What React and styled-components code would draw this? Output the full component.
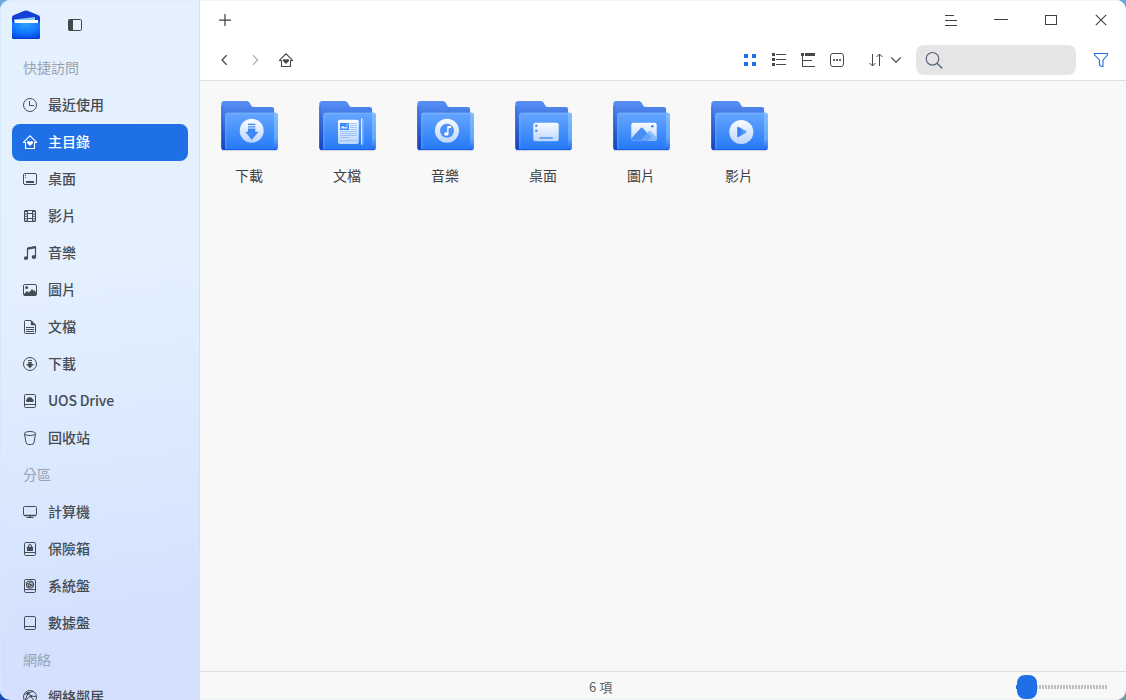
import React from "react";
import styled, { createGlobalStyle } from "styled-components";

const GlobalStyle = createGlobalStyle`
  * { box-sizing: border-box; }
  html, body { margin: 0; height: 100%; overflow: hidden; }
  #root { height: 100vh; }
  body {
    font-family: "Noto Sans CJK TC", "Noto Sans CJK SC", sans-serif;
    background:
      linear-gradient(90deg, #6fa9e4, #6aa5e6) top / 100% 50% no-repeat,
      linear-gradient(90deg, #1a48b8 0%, #7398ae 100%) bottom / 100% 50% no-repeat;
  }
  svg { display: block; flex: none; }
`;

const Window = styled.div`
  display: flex;
  width: 100vw;
  height: 100vh;
  border-radius: 10px;
  overflow: hidden;
`;

const Sidebar = styled.aside`
  flex: none;
  width: 200px;
  height: 100%;
  overflow: hidden;
  background: linear-gradient(172deg, #e5f1fe 0%, #e4f0fe 38%, #dceafe 62%, #d5e2fe 84%, #d3dffd 100%);
  border-right: 1px solid #d6e1f0;
  box-shadow: inset 1px 0 #d5e7fb, inset 0 1px #deecfb;
`;

const SidebarHeader = styled.div`
  display: flex;
  align-items: flex-start;
  height: 50px;
  padding: 9px 0 0 11px;
  gap: 26px;
`;

const ToggleSlot = styled.div`
  padding-top: 8px;
  color: #43484d;
`;

const GroupTitle = styled.div`
  height: 37px;
  padding-left: 23px;
  font-size: 14px;
  line-height: 34px;
  color: #98a3af;
`;

const Row = styled.div`
  display: flex;
  align-items: flex-start;
  gap: 10px;
  height: 37px;
  margin: 0 11px 0 12px;
  padding: 10px 0 0 10px;
  border-radius: 8px;
  background: ${(p) => (p.$active ? "#1f6fe7" : "transparent")};
  color: ${(p) => (p.$active ? "#fff" : "#454c53")};
`;

const RowLabel = styled.span`
  font-size: 14px;
  font-weight: 500;
  line-height: 14px;
  letter-spacing: ${(p) => (p.$latin ? "-0.18px" : "normal")};
  white-space: nowrap;
`;

const Main = styled.main`
  flex: 1;
  min-width: 0;
  display: flex;
  flex-direction: column;
  background: #f8f8f8;
`;

const TitleBar = styled.div`
  display: flex;
  align-items: center;
  justify-content: space-between;
  height: 40px;
  background: #fff;
  box-shadow: inset 0 1px #edf5fd;
  color: #414141;
`;

const WindowButtons = styled.div`
  display: flex;
`;

const TitleButton = styled.div`
  display: flex;
  align-items: center;
  justify-content: center;
  width: 50px;
  height: 40px;
  color: #414141;
`;

const Toolbar = styled.div`
  display: flex;
  align-items: center;
  height: 41px;
  padding: 0 17px 1px 16px;
  background: #fff;
  border-bottom: 1px solid #e0e0e0;
  color: #484848;
`;

const NavGroup = styled.div`
  display: flex;
  flex: 1;
  gap: 15px;
`;

const ViewGroup = styled.div`
  display: flex;
  gap: 13px;
  margin-right: 23px;
`;

const SortGroup = styled.div`
  display: flex;
  gap: 4px;
  margin-right: 12px;
`;

const ToolIcon = styled.span`
  color: ${(p) => p.$tone || "inherit"};
`;

const SearchBox = styled.div`
  display: flex;
  align-items: center;
  width: 160px;
  height: 30px;
  padding-left: 8px;
  margin-right: 17px;
  border-radius: 8px;
  background: #e5e5e5;
  color: #56627a;
`;

const Files = styled.div`
  flex: 1;
  display: flex;
  align-items: flex-start;
  padding-top: 13px;
`;

const FileItem = styled.div`
  display: flex;
  flex-direction: column;
  align-items: center;
  gap: 7px;
  width: 98px;
`;

const FileLabel = styled.span`
  font-size: 14px;
  line-height: 20px;
  color: #414141;
`;

const StatusBar = styled.footer`
  display: grid;
  grid-template-columns: 1fr auto 1fr;
  align-items: center;
  height: 29px;
  border-top: 1px solid #dedede;
  box-shadow: inset 0 -1px #edf0f5;
`;

const Count = styled.span`
  grid-column: 1 / 3;
  padding-left: 389px;
  margin-top: 2px;
  font-size: 13px;
  line-height: 20px;
  color: #5f5f5f;
`;

const Slider = styled.div`
  grid-column: 3;
  justify-self: end;
  display: flex;
  align-items: center;
  height: 28px;
  margin-right: 18px;
  padding-top: 1px;
`;

const SliderStart = styled.i`
  width: 1px;
  height: 4px;
  background: #1f6fe7;
`;

const Knob = styled.i`
  width: 20px;
  height: 24px;
  border-radius: 8px;
  background: #1f6fe7;
`;

const Ticks = styled.i`
  width: 71px;
  height: 4px;
  background: repeating-linear-gradient(90deg, transparent 0 1px, #c0c0c0 1px 3px);
  background-position: 1px 0;
`;

const Icon = ({ w = 16, h = 16, children }) => (
  <svg width={w} height={h} viewBox={`0 0 ${w} ${h}`} fill="none" stroke="currentColor" strokeWidth="1">
    {children}
  </svg>
);
const Solid = (props) => <g fill="currentColor" stroke="none" {...props} />;

const Disk = () => (
  <>
    <rect x="2.5" y="1.5" width="11" height="13" rx="1.3" />
    <path d="M2.5 11.5h11" />
  </>
);

const icons = {
  clock: (
    <>
      <circle cx="8" cy="8" r="6.5" />
      <path d="M7.5 4v4.5H12" />
    </>
  ),
  home: (
    <>
      <path d="M3.5 8v6.5h9V8" strokeWidth="1.1" />
      <path d="M1 8.5h2M13 8.5h2M1.6 8.2 8 1.8l6.4 6.4" strokeWidth="1.1" />
      <Solid>
        <path d="M8 12 5.2 9.3C4.5 8.2 5.2 7 6.4 7c.7 0 1.2.3 1.6.9.4-.6.9-.9 1.6-.9 1.2 0 1.9 1.2 1.2 2.3z" />
      </Solid>
    </>
  ),
  desktop: (
    <>
      <rect x="1.5" y="2.5" width="13" height="11" rx="1.5" />
      <Solid>
        <path d="M3 4h1v1H3zM3 6h1v1H3zM4 10h8v2H4z" />
      </Solid>
    </>
  ),
  film: (
    <>
      <rect x="2.5" y="2.5" width="11" height="11" rx=".5" />
      <path d="M5.5 2.5v11M10.5 2.5v11M5.5 5.5h5M5.5 10.5h5" />
      <path d="M4 3v10M12 3v10" strokeWidth="2" strokeDasharray="1 1.4" />
    </>
  ),
  music: (
    <>
      <path d="M5.500 13V3.400l8-1.600V12" strokeWidth="1.200" />
      <path d="M5.500 3.600l8-1.500" strokeWidth="2.200" />
      <Solid>
        <ellipse cx="4" cy="13.100" rx="2.200" ry="1.900" />
        <ellipse cx="11.900" cy="12" rx="2.200" ry="1.900" />
      </Solid>
    </>
  ),
  picture: (
    <>
      <rect x="1.500" y="2.500" width="13" height="11" rx="1.300" />
      <Solid>
        <circle cx="4.600" cy="5.600" r="1.500" />
        <path d="M2 13.500V12l3-2.900 2 1.400 3-3.400 1.400 1.600 1-.6L14.300 11v2.500z" />
      </Solid>
    </>
  ),
  document: (
    <>
      <path d="M2.500 2.500q0-1 1-1H9l4.500 4.500v7.500q0 1-1 1h-9q-1 0-1-1zM4 8.500h8M4 10.500h8M4 12.500h8" />
      <Solid>
        <path d="M8.800 1.200 13.800 6.200H9.600q-.8 0-.8-.8z" />
      </Solid>
    </>
  ),
  download: (
    <>
      <circle cx="8" cy="8" r="6.500" />
      <Solid>
        <path d="M6 4h4v1H6zM6 6h4v1H6zM6.500 7h3v1H12l-4 4.300L4 8h2.500z" />
      </Solid>
    </>
  ),
  drive: (
    <>
      <Disk />
      <Solid>
        <path d="M5 9a1.400 1.400 0 0 1-.2-2.600C5 4.600 6.600 3.800 8 4.400c1-.2 2.200.4 2.500 1.600C12 6.200 12.300 8.500 11 9z" />
      </Solid>
    </>
  ),
  trash: (
    <>
      <ellipse cx="8" cy="3.500" rx="5.500" ry="2" />
      <path d="M2.500 3.700 4 12.500q.3 2 2.500 2h3q2.200 0 2.500-2l1.500-8.800" />
    </>
  ),
  computer: (
    <>
      <rect x="1.500" y="2.500" width="13" height="9" rx="1" />
      <path d="M2 11.500h12M8 11.500v2" strokeWidth="1.500" />
      <path d="M4.500 13.500h7" />
    </>
  ),
  safe: (
    <>
      <Disk />
      <path d="M6.500 6V5a1.500 1.500 0 0 1 3 0v1" />
      <Solid>
        <rect x="5" y="5.700" width="6" height="4.300" rx=".6" />
      </Solid>
    </>
  ),
  system: (
    <>
      <Disk />
      <circle cx="8" cy="6.500" r="3.500" strokeWidth="1.200" />
      <path d="M9.800 4.200C7 4 6.500 6.200 8.200 6.600S9 9 6.200 8.800M5.800 5l1 3.500M10 5.500v2.500" strokeWidth="1.100" />
    </>
  ),
  data: <Disk />,
  network: (
    <>
      <circle cx="8" cy="8" r="6.500" />
      <path d="M2.500 5.500 6 4l6.500 8M6 4l-3 7.500M6 4l5-1.500M14 7.500 8.500 7 3 11.500" />
      <Solid>
        <circle cx="6" cy="4.300" r="1.500" />
        <circle cx="9" cy="7.300" r="1.300" />
      </Solid>
    </>
  ),
};

const groups = [
  {
    title: "快捷訪問",
    rows: [
      ["clock", "最近使用"],
      ["home", "主目錄"],
      ["desktop", "桌面"],
      ["film", "影片"],
      ["music", "音樂"],
      ["picture", "圖片"],
      ["document", "文檔"],
      ["download", "下載"],
      ["drive", "UOS Drive"],
      ["trash", "回收站"],
    ],
  },
  {
    title: "分區",
    rows: [
      ["computer", "計算機"],
      ["safe", "保險箱"],
      ["system", "系統盤"],
      ["data", "數據盤"],
    ],
  },
  { title: "網絡", rows: [["network", "網絡鄰居"]] },
];

const Logo = () => (
  <svg width="30" height="32" viewBox="0 0 30 32">
    <defs>
      <radialGradient id="logoFront" cx=".5" cy=".15" r=".85">
        <stop offset="0" stopColor="#2ea3ff" />
        <stop offset=".55" stopColor="#1479ff" />
        <stop offset="1" stopColor="#0549ea" />
      </radialGradient>
    </defs>
    <path d="M1 8.500Q1 7 2.500 6.300L13.500 1.800Q15 1.200 16.500 1.800L27.500 6.300Q29 7 29 8.500V28q0 2-2 2H3q-2 0-2-2z" fill="#153fd6" />
    <path d="M3 10.500 24 8v4H3z" fill="#8dcbf8" />
    <path d="M1 12.500l2 1.500h24l2-1.500V28q0 2-2 2H3q-2 0-2-2z" fill="url(#logoFront)" />
    <rect x="3.500" y="11" width="23.500" height="3" fill="#fff" />
    <path d="M1.500 27.500q0 2 2 2h23q2 0 2-2" fill="none" stroke="#0636c8" strokeWidth="1" />
  </svg>
);

const emblems = {
  download: (
    <>
      <circle cx="34.700" cy="36.700" r="12" fill="url(#emblem)" />
      <path d="M31 29.700h7.300v1.300H31zM31 32.200h7.300v1.300H31zM31 34.500h7.300v3.300h3.200L34.700 46l-6.200-8.200H31z" fill="#3f86f4" />
    </>
  ),
  document: (
    <>
      <rect x="23" y="25.700" width="20.700" height="24.300" rx="1.800" fill="url(#emblem)" />
      <rect x="25" y="29" width="9" height="7" fill="#3f8bf7" />
      <path d="M26 34.500v-1.500l2-1 2 1.200 2.500-.5v1.800z" fill="#d8e8ff" />
      <circle cx="32" cy="31" r=".7" fill="#fff" />
      <path d="M35 29.500h7M35 31.500h7M35 33.500h7M35 35.500h7M25 37.500h17M25 39.500h17M25 41.500h17M25 43.500h9M25 46.700h17" stroke="#8ab8f8" strokeWidth=".8" />
      <path d="M46.700 24.300v26.500" stroke="#e0edff" strokeWidth="1.300" />
      <path d="M48 25.500v24" stroke="#8ebcff" strokeWidth=".8" />
    </>
  ),
  music: (
    <>
      <circle cx="34" cy="36.700" r="12" fill="url(#emblem)" />
      <circle cx="34" cy="36.700" r="7" fill="#4b91f7" />
      <path d="M34.200 40V32.300l3.800-.6v2.200l-2.500.4v5.900" fill="#fff" />
      <ellipse cx="33.300" cy="40" rx="2.200" ry="1.800" fill="#fff" />
    </>
  ),
  desktop: (
    <>
      <rect x="22.300" y="28.700" width="25.400" height="18.500" rx="2" fill="url(#emblem)" />
      <circle cx="25.300" cy="31.700" r="1.300" fill="#4e92f5" />
      <circle cx="25.300" cy="36.700" r="1.300" fill="#4e92f5" />
      <rect x="28" y="43" width="14" height="2" rx="1" fill="#6ba4f8" />
    </>
  ),
  picture: (
    <>
      <rect x="22.300" y="28.700" width="25.400" height="18" rx="2" fill="url(#emblem)" />
      <path d="m31.500 46.700 8.500-9.500q.8-.7 1.500 0l6.200 6.200v1.300q0 2-2 2z" fill="#84b9fb" />
      <path d="m22.300 44.500 9.500-10.600q1-.8 2 0l8 9-3.500 3.800h-14q-2 0-2-2z" fill="#488ef5" />
      <path d="m31.500 46.700 6.700-7.600 3.600 3.800-3.500 3.800z" fill="#68a5f9" />
      <circle cx="43.300" cy="32.300" r="1.300" fill="#3c84ef" />
    </>
  ),
  video: (
    <>
      <circle cx="34.300" cy="38" r="12" fill="url(#emblem)" />
      <path d="M30.300 33.700q0-1.400 1.300-.8l7.600 4.200q1 .8 0 1.600l-7.600 4.300q-1.300.5-1.300-.8z" fill="url(#play)" />
    </>
  ),
};

const Folder = ({ emblem }) => (
  <svg width="64" height="64" viewBox="0 0 64 64">
    <defs>
      <linearGradient id="back" x1="0" y1="0" x2="0" y2="1">
        <stop offset="0" stopColor="#5a90f6" />
        <stop offset=".3" stopColor="#3f75e0" />
        <stop offset="1" stopColor="#1443bd" />
      </linearGradient>
      <linearGradient id="front" x1="0" y1="0" x2="0" y2="1">
        <stop offset="0" stopColor="#66a6ff" />
        <stop offset="1" stopColor="#2479f8" />
      </linearGradient>
      <linearGradient id="edge" x1="0" y1="0" x2="0" y2="1">
        <stop offset="0" stopColor="#80bcff" />
        <stop offset=".7" stopColor="#5fa8ff" />
        <stop offset="1" stopColor="#2467f0" />
      </linearGradient>
      <linearGradient id="emblem" x1="0" y1="0" x2="0" y2="1">
        <stop offset="0" stopColor="#fafcff" />
        <stop offset="1" stopColor="#bcd6fd" />
      </linearGradient>
      <linearGradient id="play">
        <stop offset="0" stopColor="#2479f3" />
        <stop offset="1" stopColor="#6ba9ff" />
      </linearGradient>
    </defs>
    <path d="M5 56.700h55" stroke="#000" strokeOpacity=".1" strokeWidth="1" />
    <path d="M4.300 9.500q0-2.200 2.200-2.200h23.300q2 0 3 1.800l1.500 2.600q.8 1.300 2.500 1.300h18q2.300 0 2.300 2.300V56H6.300q-2 0-2-2z" fill="url(#back)" />
    <path d="M6.500 7.800h23.300q1.600 0 2.600 1.600" fill="none" stroke="#3f7ceb" strokeWidth=".8" />
    <path d="M4.800 12v42" stroke="#1848c4" strokeOpacity=".6" strokeWidth="1" />
    <path d="M8.300 20.700q0-2 2-2h48.400q2 0 2 2V54q0 2-2 2H10.300q-2 0-2-2z" fill="url(#front)" />
    <path d="M57 18.700h1.700q2 0 2 2V54q0 2-2 2H57z" fill="url(#edge)" />
    <path d="M8.800 55V21q0-1.800 1.800-1.800H57" fill="none" stroke="#8dc0ff" strokeOpacity=".6" strokeWidth=".9" />
    <path d="M5 55.600h54" stroke="#1a56dc" strokeWidth=".9" />
    {emblems[emblem]}
  </svg>
);

const folders = [
  ["download", "下載"],
  ["document", "文檔"],
  ["music", "音樂"],
  ["desktop", "桌面"],
  ["picture", "圖片"],
  ["video", "影片"],
];

export default function App() {
  return (
    <>
      <GlobalStyle />
      <Window>
        <Sidebar>
          <SidebarHeader>
            <Logo />
            <ToggleSlot>
              <Icon>
                <rect x="1.500" y="2.500" width="13" height="11" rx="1.200" />
                <Solid>
                  <rect x="1.500" y="2.500" width="4.500" height="11" />
                </Solid>
              </Icon>
            </ToggleSlot>
          </SidebarHeader>
          {groups.map((g) => (
            <React.Fragment key={g.title}>
              <GroupTitle>{g.title}</GroupTitle>
              {g.rows.map(([icon, label]) => (
                <Row key={label} $active={icon === "home"}>
                  <Icon>{icons[icon]}</Icon>
                  <RowLabel $latin={icon === "drive"}>{label}</RowLabel>
                </Row>
              ))}
            </React.Fragment>
          ))}
        </Sidebar>
        <Main>
          <TitleBar>
            <TitleButton>
              <Icon>
                <path d="M2 8h12M8 2v12" strokeWidth="1.250" />
              </Icon>
            </TitleButton>
            <WindowButtons>
              <TitleButton>
                <Icon>
                  <path d="M2 3.500h9M2 8.500h12M2 13.500h12" />
                </Icon>
              </TitleButton>
              <TitleButton>
                <Icon>
                  <path d="M1 7.500h14" />
                </Icon>
              </TitleButton>
              <TitleButton>
                <Icon>
                  <rect x="2.500" y="3.500" width="11" height="9" />
                </Icon>
              </TitleButton>
              <TitleButton>
                <Icon>
                  <path d="m2.800 2.800 10.400 10.400M13.200 2.800 2.800 13.200" strokeWidth="1.100" />
                </Icon>
              </TitleButton>
            </WindowButtons>
          </TitleBar>
          <Toolbar>
            <NavGroup>
              <ToolIcon>
                <Icon>
                  <path d="M10.700 3.300 6 8l4.700 4.700" strokeWidth="1.300" />
                </Icon>
              </ToolIcon>
              <ToolIcon $tone="#b0b0b0">
                <Icon>
                  <path d="M6 3.300 10.700 8 6 12.700" strokeWidth="1.300" />
                </Icon>
              </ToolIcon>
              <ToolIcon>
                <Icon>{icons.home}</Icon>
              </ToolIcon>
            </NavGroup>
            <ViewGroup>
              <ToolIcon $tone="#1f6fe7">
                <Icon>
                  <Solid>
                    <path d="M2 2h4v4H2zM10 2h4v4h-4zM2 10h4v4H2zM10 10h4v4h-4z" />
                  </Solid>
                </Icon>
              </ToolIcon>
              <ToolIcon>
                <Icon>
                  <Solid>
                    <path d="M1 1h3v3H1zM1 6h3v3H1zM1 11h3v3H1zM5 2h10v1H5zM5 7h10v1H5zM5 12h10v1H5z" />
                  </Solid>
                </Icon>
              </ToolIcon>
              <ToolIcon>
                <Icon>
                  <Solid>
                    <path d="M1 1h3v3H1zM5 1h10v3H5zM2 4h1v11H2zM3 8h9v1H3zM3 14h12v1H3z" />
                  </Solid>
                </Icon>
              </ToolIcon>
              <ToolIcon>
                <Icon>
                  <rect x="1.500" y="1.500" width="13" height="13" rx="2.500" />
                  <Solid opacity=".85">
                    <path d="M4 7h2v2H4zM7 7h2v2H7zM10 7h2v2h-2z" />
                  </Solid>
                </Icon>
              </ToolIcon>
            </ViewGroup>
            <SortGroup>
              <ToolIcon>
                <Icon>
                  <path d="M4.500 2v12M1.500 11l3 3 3-3M11.500 14V2M8.500 5l3-3 3 3" />
                </Icon>
              </ToolIcon>
              <ToolIcon>
                <Icon>
                  <path d="m3.300 5.500 4.700 4.700 4.700-4.700" strokeWidth="1.200" />
                </Icon>
              </ToolIcon>
            </SortGroup>
            <SearchBox>
              <Icon w={20} h={20}>
                <circle cx="8.500" cy="8.800" r="6.300" strokeWidth="1.200" />
                <path d="m13 13.300 5.300 5.200" strokeWidth="1.300" />
              </Icon>
            </SearchBox>
            <ToolIcon $tone="#1f6fe7">
              <Icon>
                <path d="M1.500 1.500h13v1.300L10 8.200v6.300H8.500l-2-1.500V8.200L1.500 2.800z" strokeWidth="1.100" />
              </Icon>
            </ToolIcon>
          </Toolbar>
          <Files>
            {folders.map(([emblem, label]) => (
              <FileItem key={label}>
                <Folder emblem={emblem} />
                <FileLabel>{label}</FileLabel>
              </FileItem>
            ))}
          </Files>
          <StatusBar>
            <Count>6 項</Count>
            <Slider>
              <SliderStart />
              <Knob />
              <Ticks />
            </Slider>
          </StatusBar>
        </Main>
      </Window>
    </>
  );
}
